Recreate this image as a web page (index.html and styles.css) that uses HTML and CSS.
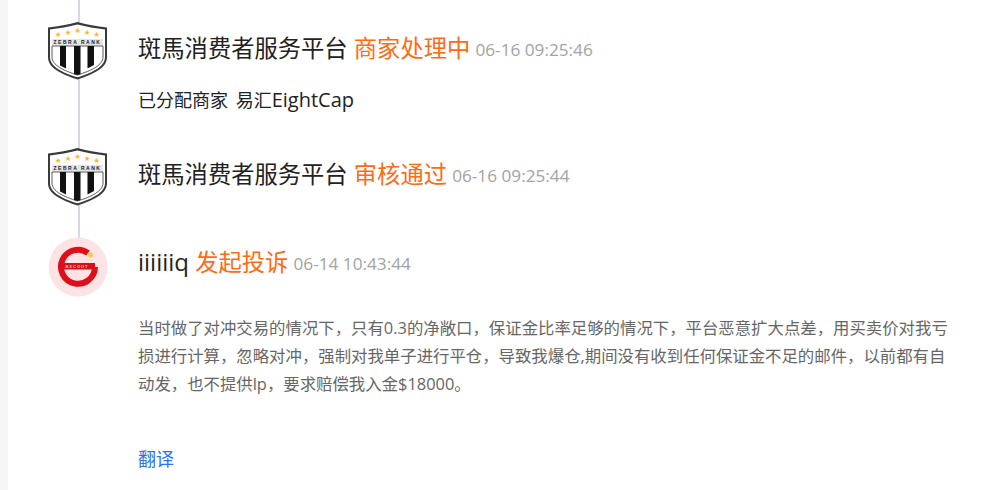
FILE: index.html
```html
<!DOCTYPE html>
<html lang="en">
<head>
  <meta charset="UTF-8" />
  <title>投诉详情</title>
  <link rel="stylesheet" href="styles.css">
</head>
<body>
  <div class="timeline">
    <div class="line"></div>

    <div class="entry entry-first">
      <svg class="avatar" viewBox="0 0 60 60">
        <use href="#shield"></use>
      </svg>
      <div class="content">
        <div class="title">
          <span class="name">斑馬消费者服务平台</span>
          <span class="status">商家处理中</span>
          <span class="time">06-16 09:25:46</span>
        </div>
        <p class="note">已分配商家 易汇<span class="latin">EightCap</span></p>
      </div>
    </div>

    <div class="entry entry-second">
      <svg class="avatar" viewBox="0 0 60 60">
        <defs>
          <g id="shield">
            <path d="M29.500 0 C21 2.500 10 4.500 0 5.500 V35 C0 46 13 52 29.500 57.500 C46 52 59 46 59 35 V5.500 C49 4.500 38 2.500 29.500 0Z" fill="#3a3a3a"/>
            <path d="M29.500 2.500 C21 4.800 11 6.500 2 7.500 V35 C2 44.500 14 50.500 29.500 55.300 C45 50.500 57 44.500 57 35 V7.500 C48 6.500 38 4.800 29.500 2.500Z" fill="#fff"/>
            <rect x="4" y="17" width="51" height="6.500" fill="#e4e4e4"/>
            <path d="M4 24 H55 V35 C55 43 44 48.500 29.500 53 C15 48.500 4 43 4 35Z" fill="#fff" stroke="#333" stroke-width=".8"/>
            <path d="M12 24 H18 V46.500 L12 43.500Z M26 24 H32.500 V52 L29.500 53 L26 52Z M39.500 24 H46 V43 L39.500 46.500Z" fill="#111"/>
            <text x="29.500" y="21.900" class="shield-text" text-anchor="middle">ZEBRA RANK</text>
            <g fill="#f5b93a" text-anchor="middle" class="stars">
              <text x="10" y="15">★</text>
              <text x="20" y="13">★</text>
              <text x="29.500" y="11">★</text>
              <text x="39" y="13">★</text>
              <text x="48.500" y="15">★</text>
            </g>
          </g>
        </defs>
        <use href="#shield"></use>
      </svg>
      <div class="content">
        <div class="title">
          <span class="name">斑馬消费者服务平台</span>
          <span class="status">审核通过</span>
          <span class="time">06-16 09:25:44</span>
        </div>
      </div>
    </div>

    <div class="entry entry-third">
      <svg class="avatar" viewBox="0 0 60 60">
        <circle cx="30" cy="30" r="29.500" fill="#fde3e4"/>
        <path d="M40 16 A17 17 0 1 0 47 30" fill="none" stroke="#dd0f1a" stroke-width="6"/>
        <rect x="15" y="26" width="32" height="6.500" fill="#d8101a"/>
        <text x="29" y="31.300" class="logo-text" text-anchor="middle">BXCOOT</text>
        <circle cx="42.500" cy="18" r="2.500" fill="#f4cf45"/>
      </svg>
      <div class="content">
        <div class="title">
          <span class="name">iiiiiiq</span>
          <span class="status">发起投诉</span>
          <span class="time">06-14 10:43:44</span>
        </div>
        <p class="desc">当时做了对冲交易的情况下，只有0.3的净敞口，保证金比率足够的情况下，平台恶意扩大点差，用买卖价对我亏损进行计算，忽略对冲，强制对我单子进行平仓，导致我爆仓,期间没有收到任何保证金不足的邮件，以前都有自动发，也不提供lp，要求赔偿我入金$18000。</p>
        <a class="translate" href="#">翻译</a>
      </div>
    </div>
  </div>
</body>
</html>
```

FILE: styles.css
```css
html, body {
  margin: 0;
  height: 490px;
  overflow: hidden;
}
body {
  background: #f5f6f8;
  padding-left: 8px;
  font-family: "Open Sans", "Noto Sans CJK SC", sans-serif;
}
.timeline {
  position: relative;
  background: #fff;
  height: 490px;
  padding: 22px 30px 0 40px;
  box-sizing: border-box;
}
.line {
  position: absolute;
  left: 70px;
  top: 0;
  width: 2px;
  height: 240px;
  background: #d6d9e4;
}
.entry {
  position: relative;
  display: flex;
  gap: 30px;
}
.entry-first { height: 126px; }
.entry-second { height: 89px; }
.avatar {
  width: 60px;
  height: 60px;
  flex: none;
}
.shield-text {
  font: bold 5px "Liberation Sans", sans-serif;
  letter-spacing: 1.500px;
  fill: #222;
}
.stars text {
  font: 7.500px "DejaVu Sans", sans-serif;
}
.logo-text {
  font: bold 4px "Liberation Sans", sans-serif;
  letter-spacing: 1px;
  fill: #f8c6c8;
}
.content { flex: 1; }
.title {
  height: 54px;
  line-height: 52px;
  white-space: nowrap;
}
.entry-third .title {
  height: 52px;
  line-height: 50px;
}
.name {
  font-size: 23.300px;
  color: #222;
}
.entry-third .name { font-size: 24px; }
.status {
  margin-left: 2px;
  font-size: 23.300px;
  color: #ff6a13;
}
.time {
  margin-left: 1px;
  font-size: 17.200px;
  vertical-align: 1px;
  color: #a3a3a3;
}
.note {
  margin: 10px 0 0;
  font-size: 18px;
  line-height: 28px;
  word-spacing: 3px;
  color: #222;
}
.latin { font-size: 20px; }
.desc {
  margin: 25px 0 0;
  font-size: 16.400px;
  line-height: 28px;
  color: #666;
}
.translate {
  display: block;
  margin-top: 47px;
  font-size: 18px;
  line-height: 28px;
  color: #2a72ee;
  text-decoration: none;
}
```
